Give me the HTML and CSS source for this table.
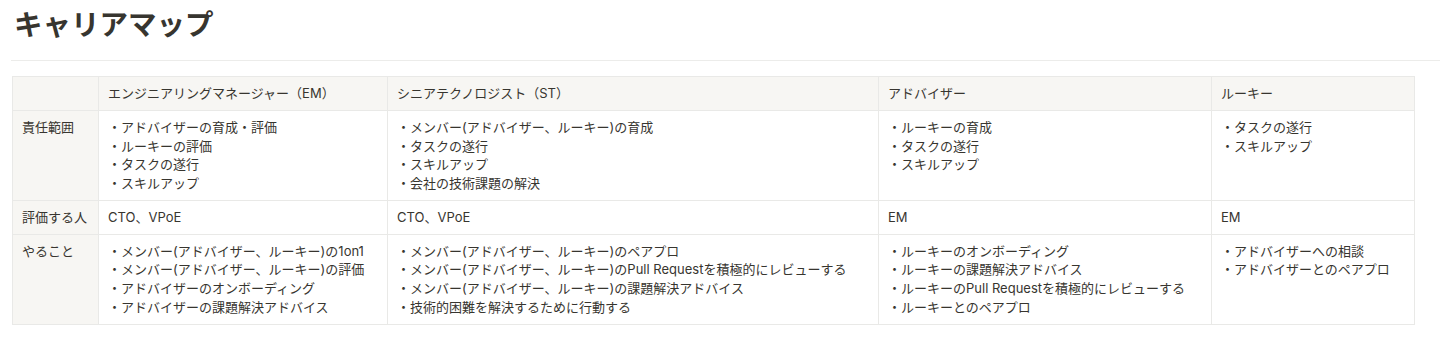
FILE: index.html
```html
<!DOCTYPE html>
<html lang="ja">
<head>
<meta charset="utf-8">
<title>キャリアマップ</title>
<link rel="stylesheet" href="styles.css">
</head>
<body>
<main class="page">
  <h1 class="title">キャリアマップ</h1>
  <hr class="divider">
  <table class="map">
    <colgroup>
      <col class="c0"><col class="c1"><col class="c2"><col class="c3"><col class="c4">
    </colgroup>
    <thead>
      <tr>
        <th class="corner"></th>
        <th>エンジニアリングマネージャー（EM）</th>
        <th>シニアテクノロジスト（ST）</th>
        <th>アドバイザー</th>
        <th>ルーキー</th>
      </tr>
    </thead>
    <tbody>
      <tr>
        <th class="rowhead">責任範囲</th>
        <td>・アドバイザーの育成・評価<br>・ルーキーの評価<br>・タスクの遂行<br>・スキルアップ</td>
        <td>・メンバー(アドバイザー、ルーキー)の育成<br>・タスクの遂行<br>・スキルアップ<br>・会社の技術課題の解決</td>
        <td>・ルーキーの育成<br>・タスクの遂行<br>・スキルアップ</td>
        <td>・タスクの遂行<br>・スキルアップ</td>
      </tr>
      <tr>
        <th class="rowhead">評価する人</th>
        <td>CTO、VPoE</td>
        <td>CTO、VPoE</td>
        <td>EM</td>
        <td>EM</td>
      </tr>
      <tr>
        <th class="rowhead">やること</th>
        <td>・メンバー(アドバイザー、ルーキー)の1on1<br>・メンバー(アドバイザー、ルーキー)の評価<br>・アドバイザーのオンボーディング<br>・アドバイザーの課題解決アドバイス</td>
        <td>・メンバー(アドバイザー、ルーキー)のペアプロ<br>・メンバー(アドバイザー、ルーキー)のPull Requestを積極的にレビューする<br>・メンバー(アドバイザー、ルーキー)の課題解決アドバイス<br>・技術的困難を解決するために行動する</td>
        <td>・ルーキーのオンボーディング<br>・ルーキーの課題解決アドバイス<br>・ルーキーのPull Requestを積極的にレビューする<br>・ルーキーとのペアプロ</td>
        <td>・アドバイザーへの相談<br>・アドバイザーとのペアプロ</td>
      </tr>
    </tbody>
  </table>
</main>
</body>
</html>
```
FILE: styles.css
```css
html, body {
  margin: 0;
  padding: 0;
  background: #ffffff;
}

body {
  font-family: Inter, "Noto Sans CJK JP", sans-serif;
  color: #37352f;
}

.page {
  padding: 6px 0 0 12px;
}

.title {
  margin: 0 0 0 2px;
  font-size: 28.5px;
  line-height: 34px;
  font-weight: 700;
  color: #37352f;
  font-family: "Noto Sans CJK JP", sans-serif;
}

.divider {
  margin: 20px 0 15px -1px;
  border: 0;
  border-top: 1px solid #ececea;
  height: 0;
}

.map {
  border-collapse: collapse;
  table-layout: fixed;
  width: 1403px;
  font-size: 13px;
  line-height: 18.75px;
}

.c0 { width: 86px; }
.c1 { width: 289px; }
.c2 { width: 491px; }
.c3 { width: 333px; }
.c4 { width: 203px; }

.map th,
.map td {
  border: 1px solid #e9e9e7;
  padding: 7px 9px;
  text-align: left;
  vertical-align: top;
  font-weight: 400;
  white-space: nowrap;
  overflow: hidden;
}

.map thead th {
  background: #f7f6f3;
}

.map .rowhead {
  background: #f7f6f3;
}
```
